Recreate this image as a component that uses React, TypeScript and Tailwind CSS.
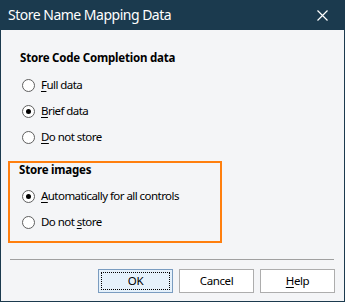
import React from "react";

const font = { fontFamily: '"Noto Sans", "Open Sans", sans-serif' };

function Radio({ checked, label, hot }: { checked?: boolean; label: string; hot: number }) {
  return (
    <div className="h-[26px] flex items-center ml-[21px]">
      <span className="w-[13px] h-[13px] rounded-full border border-[#5f5f5f] bg-white flex items-center justify-center">
        {checked && <span className="w-[5px] h-[5px] rounded-full bg-black" />}
      </span>
      <span className="ml-[6px] text-[11.5px] leading-[16px] tracking-[-0.55px] text-black">
        {label.slice(0, hot)}
        <span className="underline underline-offset-2">{label[hot]}</span>
        {label.slice(hot + 1)}
      </span>
    </div>
  );
}

function Button({ label, focused, hot }: { label: string; focused?: boolean; hot?: number }) {
  return (
    <button
      className={
        "w-[75px] h-[24px] border text-[11.5px] leading-[16px] tracking-[-0.4px] text-black flex items-center justify-center p-[2px] " +
        (focused ? "border-[#7a9cc0] bg-[#e5f1fb]" : "border-[#adadad] bg-white")
      }
    >
      <span
        className={
          "w-full h-full flex items-center justify-center " +
          (focused ? "border border-dotted border-black" : "")
        }
      >
        {hot === undefined ? (
          label
        ) : (
          <>
            {label.slice(0, hot)}
            <span className="underline underline-offset-2">{label[hot]}</span>
            {label.slice(hot + 1)}
          </>
        )}
      </span>
    </button>
  );
}

export default function App() {
  return (
    <div className="w-[345px] h-[302px] bg-[#1b3a4e] flex flex-col" style={font}>
      <div className="h-[30px] flex items-center justify-between pl-[8px] pr-[17px]">
        <span className="text-white text-[14px] leading-[20px] tracking-[-0.5px]">Store Name Mapping Data</span>
        <svg width="11" height="11" viewBox="0 0 11 11">
          <path d="M0.5 0.5 L10.5 10.5 M10.5 0.5 L0.5 10.5" stroke="white" strokeWidth="1.2" />
        </svg>
      </div>
      <div className="flex-1 mx-px mb-px bg-[#f4f5f7] flex flex-col">
        <div className="mt-[20px] ml-[19px] text-[11.5px] leading-[16px] tracking-[-0.2px] font-bold text-black">
          Store Code Completion data
        </div>
        <div className="mt-[6px]">
          <Radio label="Full data" hot={0} />
          <Radio label="Brief data" hot={0} checked />
          <Radio label="Do not store" hot={0} />
        </div>
        <div className="mt-[11px] ml-[7px] w-[214px] h-[82px] border-2 border-[#ff7f0e]">
          <div className="pl-[9px] text-[11.5px] leading-[14px] tracking-[-0.2px] font-bold text-black">Store images</div>
          <div className="mt-[6px] -ml-[9px]">
            <Radio label="Automatically for all controls" hot={0} checked />
            <Radio label="Do not store" hot={7} />
          </div>
        </div>
        <div className="mt-[16px] ml-[9px] mr-[10px] h-px bg-[#a0a0a0]" />
        <div className="mt-[9px] mr-[9px] flex justify-end gap-[6px]">
          <Button label="OK" focused />
          <Button label="Cancel" />
          <Button label="Help" hot={0} />
        </div>
      </div>
    </div>
  );
}
